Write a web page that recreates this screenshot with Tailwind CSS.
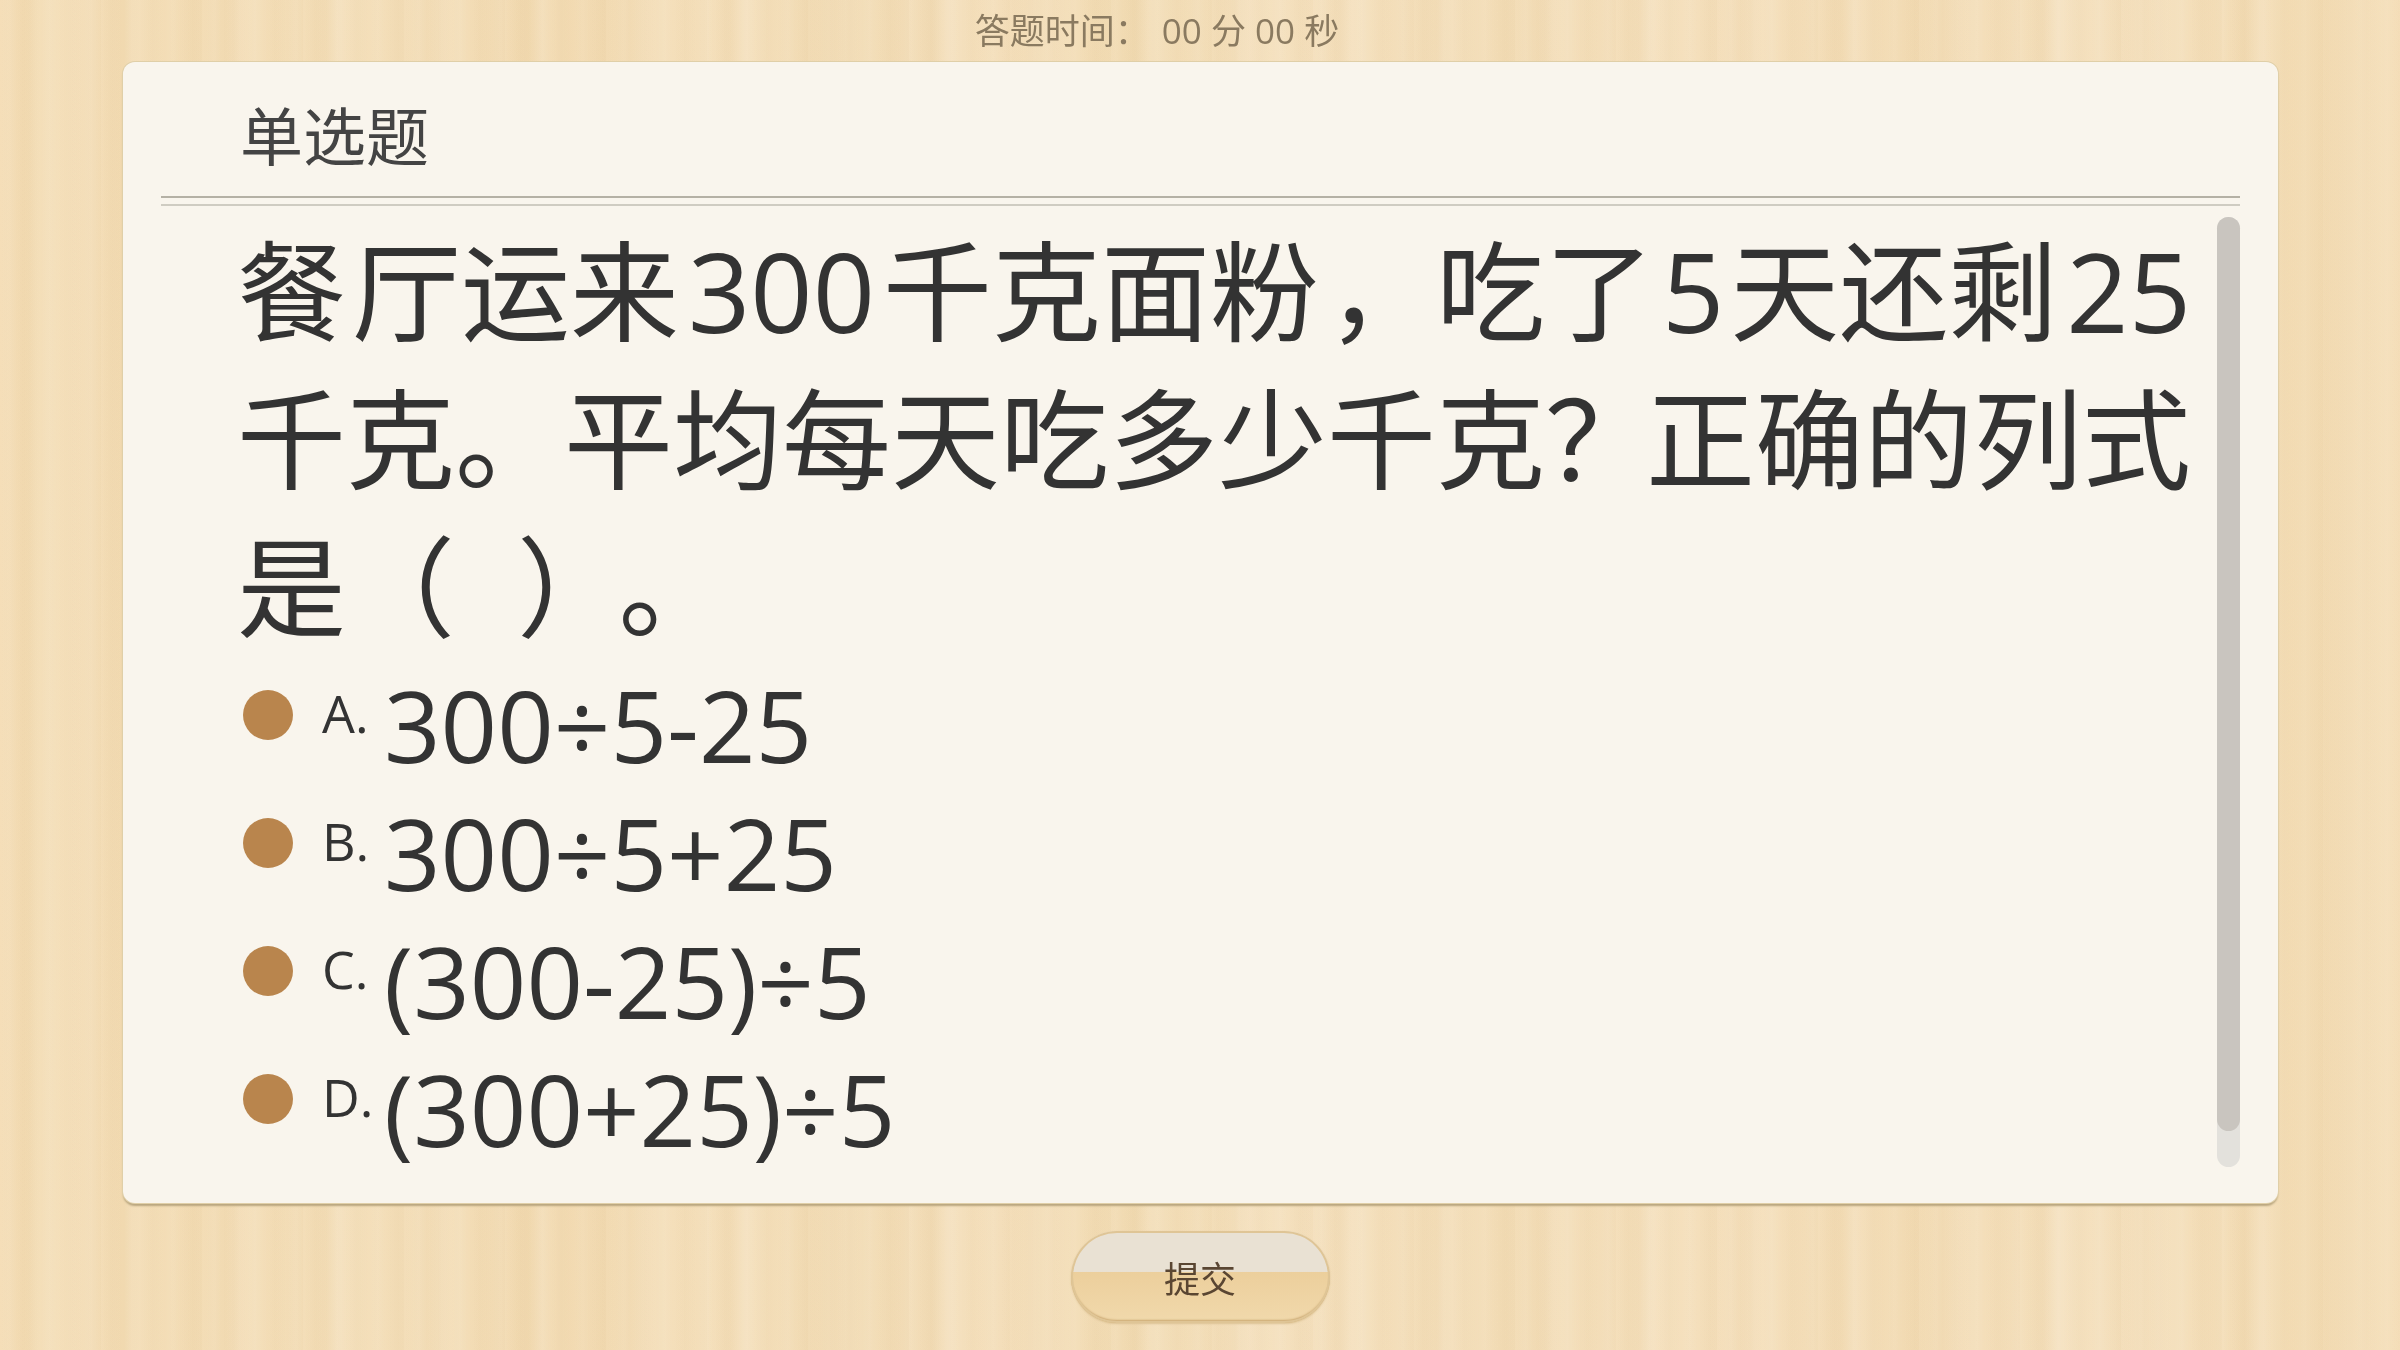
<!DOCTYPE html>
<html lang="zh-CN">
<head>
	<meta charset="UTF-8">
	<title>单选题</title>
	<script src="https://cdn.jsdelivr.net/npm/@tailwindcss/browser@4"></script>
</head>
<body class="bg-[#f4dfbb]">
	<div class="w-[2400px] h-[1350px] overflow-hidden flex flex-col font-['Open_Sans','Noto_Sans_CJK_SC',sans-serif] bg-[repeating-linear-gradient(90deg,#ffffff00_0px,#ffffff0f_9px,#ffffff00_17px,#b98a4008_29px,#ffffff00_41px),repeating-linear-gradient(90deg,#b98a4000_0px,#b98a400a_23px,#ffffff14_38px,#b98a4000_67px,#b98a4008_101px),linear-gradient(90deg,#f5deb8_0px,#f3dcb3_40px,#f5e0bc_70px,#f3dcb4_122px,#f4dfba_400px,#f2dab1_560px,#f5e0bc_700px,#f2dcb5_850px,#f5e0bd_1000px,#f2dcb4_1120px,#f5e1bf_1290px,#f3ddb7_1500px,#f5e0bd_1700px,#f3dcb5_1900px,#f5e1bf_2100px,#f3dcb4_2300px,#f5dfba_2400px)]">
		<!-- Timer -->
		<div class="h-[62px] flex items-center justify-center pr-[86px] text-[35px] text-[#8a7a60] blur-[0.7px]">
			<span>答题时间：</span>
			<span class="ml-[12px]">00 分 00 秒</span>
		</div>

		<!-- Question card -->
		<div class="ml-[123px] w-[2155px] h-[1141px] shrink-0 flex flex-col rounded-xl bg-[#f9f5ed] shadow-[0_0_0_1px_#e0cfa8,0_3px_2px_#b9a67f]">
			<div class="h-[134px] shrink-0 pl-[117px] pt-[14px] flex items-center text-[63px] text-[#444] blur-[0.6px]">单选题</div>
			<div class="mx-[38px] h-[10px] shrink-0 border-t-2 border-b-2 border-t-[#b5b1a5] border-b-[#cfccc2]"></div>

			<div class="flex-1 flex min-h-0 pl-[117px] pr-[38px]">
				<div class="flex-1 min-w-0 text-[#333] blur-[0.6px]">
					<div class="-ml-[3px] text-[109px] leading-[148px] whitespace-nowrap pt-[11px]">
						餐<span class="ml-[6px]">厅</span>运来<span class="ml-[9px] mr-[8px]">300</span>千克面粉<span class="ml-[8px]">，</span>吃了<span class="ml-[8px] mr-[6px]">5</span>天还剩<span class="ml-[9px]">25</span><br>
						千克。平均每天吃多少千克<span class="-mr-[8px]">？</span>正确的列式<br>
						是（<span class="ml-[62px]">）</span><span class="ml-[47px]">。</span>
					</div>
					<div class="flex flex-col text-[99px] mt-[4px]">
						<div class="h-[128px] flex items-start">
							<span class="w-[50px] h-[50px] ml-[3px] mt-[25px] shrink-0 rounded-full bg-[#b9854d]"></span>
							<span class="w-[29px] shrink-0"></span>
							<span class="text-[52px] w-[62px] shrink-0 leading-[60px] mt-[18px]">A.</span>
							<span class="leading-[120px] whitespace-nowrap">300÷5-25</span>
						</div>
						<div class="h-[128px] flex items-start">
							<span class="w-[50px] h-[50px] ml-[3px] mt-[25px] shrink-0 rounded-full bg-[#b9854d]"></span>
							<span class="w-[29px] shrink-0"></span>
							<span class="text-[52px] w-[62px] shrink-0 leading-[60px] mt-[18px]">B.</span>
							<span class="leading-[120px] whitespace-nowrap">300÷5+25</span>
						</div>
						<div class="h-[128px] flex items-start">
							<span class="w-[50px] h-[50px] ml-[3px] mt-[25px] shrink-0 rounded-full bg-[#b9854d]"></span>
							<span class="w-[29px] shrink-0"></span>
							<span class="text-[52px] w-[62px] shrink-0 leading-[60px] mt-[18px]">C.</span>
							<span class="leading-[120px] whitespace-nowrap">(300-25)÷5</span>
						</div>
						<div class="h-[128px] flex items-start">
							<span class="w-[50px] h-[50px] ml-[3px] mt-[25px] shrink-0 rounded-full bg-[#b9854d]"></span>
							<span class="w-[29px] shrink-0"></span>
							<span class="text-[52px] w-[62px] shrink-0 leading-[60px] mt-[18px]">D.</span>
							<span class="leading-[120px] whitespace-nowrap">(300+25)÷5</span>
						</div>
					</div>
				</div>
				<!-- Scrollbar -->
				<div class="w-[23px] shrink-0 mt-[11px] mb-[36px] rounded-full bg-[#e3e1dc] flex flex-col">
					<div class="h-[914px] rounded-full bg-[#c9c5bf]"></div>
				</div>
			</div>
		</div>

		<!-- Submit -->
		<div class="flex-1 flex items-start justify-center pt-[28px]">
			<button class="w-[259px] h-[92px] pt-[5px] rounded-[46px] overflow-hidden flex items-center justify-center text-[36px] text-[#5a4632] bg-[linear-gradient(#e9e1d3_0%,#e9e1d3_44%,#eccf9c_45%,#f1d9ac_100%)] shadow-[inset_0_0_0_2px_#dfc596,inset_0_-3px_2px_#c9a770,0_1px_2px_#dcc294] blur-[0.6px]">提交</button>
		</div>
	</div>
</body>
</html>
